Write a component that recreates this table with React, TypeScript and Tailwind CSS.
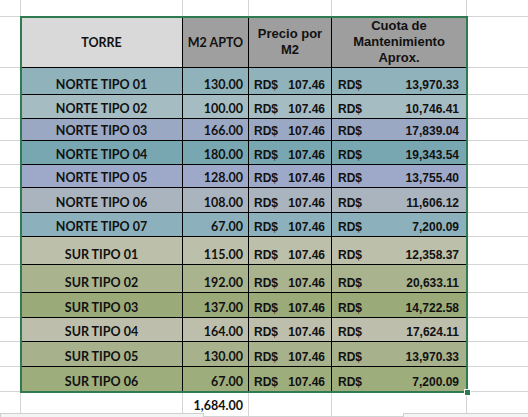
import React from 'react';

// filas de la tabla de cuotas (alto y color de fondo por fila)
const rows = [
  { name: 'NORTE TIPO 01', m2: '130.00', cuota: '13,970.33', h: 'h-[27px]', bg: 'bg-[#8fb2bb]' },
  { name: 'NORTE TIPO 02', m2: '100.00', cuota: '10,746.41', h: 'h-[24px]', bg: 'bg-[#a5bcc3]' },
  { name: 'NORTE TIPO 03', m2: '166.00', cuota: '17,839.04', h: 'h-[22px]', bg: 'bg-[#9aa8c4]' },
  { name: 'NORTE TIPO 04', m2: '180.00', cuota: '19,343.54', h: 'h-[24px]', bg: 'bg-[#78a7b2]' },
  { name: 'NORTE TIPO 05', m2: '128.00', cuota: '13,755.40', h: 'h-[23px]', bg: 'bg-[#9ea9c9]' },
  { name: 'NORTE TIPO 06', m2: '108.00', cuota: '11,606.12', h: 'h-[25px]', bg: 'bg-[#aab4bf]' },
  { name: 'NORTE TIPO 07', m2: '67.00', cuota: '7,200.09', h: 'h-[24px]', bg: 'bg-[#8cb1bc]' },
  { name: 'SUR TIPO 01', m2: '115.00', cuota: '12,358.37', h: 'h-[28px]', bg: 'bg-[#bcbfa9]' },
  { name: 'SUR TIPO 02', m2: '192.00', cuota: '20,633.11', h: 'h-[28px]', bg: 'bg-[#a9b38e]' },
  { name: 'SUR TIPO 03', m2: '137.00', cuota: '14,722.58', h: 'h-[25px]', bg: 'bg-[#9aaa78]' },
  { name: 'SUR TIPO 04', m2: '164.00', cuota: '17,624.11', h: 'h-[24px]', bg: 'bg-[#bdbfac]' },
  { name: 'SUR TIPO 05', m2: '130.00', cuota: '13,970.33', h: 'h-[25px]', bg: 'bg-[#a7b28c]' },
  { name: 'SUR TIPO 06', m2: '67.00', cuota: '7,200.09', h: 'h-[25px]', bg: 'bg-[#9dad7c]' },
];

const calibri = "font-['Lato',sans-serif] font-bold text-[12.5px] leading-[16px] text-[#111]";
const arial = "font-['Liberation_Sans',Arial,sans-serif] font-bold text-[12px] leading-[16px] text-[#111]";
const grid = 'shrink-0 border-r border-b border-[#d4d4d4]';
const cell = 'shrink-0 border-r border-b border-black flex items-end pb-[1px]';

export default function App() {
  return (
    <div className="relative w-[528px] h-[417px] overflow-hidden bg-white">
      {/* fila 1 vacía */}
      <div className="flex h-[17px]">
        <div className={`w-[21px] ${grid}`} />
        <div className={`w-[162px] ${grid}`} />
        <div className={`w-[66px] ${grid}`} />
        <div className={`w-[83px] ${grid}`} />
        <div className={`w-[135px] ${grid}`} />
        <div className="flex-1 border-b border-[#d4d4d4]" />
      </div>

      {/* encabezado */}
      <div className="flex h-[51px]">
        <div className={`w-[21px] ${grid}`} />
        <div className={`w-[162px] shrink-0 border-r border-b border-black bg-[#d9d9d9] flex items-center justify-center pt-[2px] ${calibri}`}>
          TORRE
        </div>
        <div className={`w-[66px] shrink-0 border-r border-b border-black bg-[#a09f9f] flex items-center justify-center pt-[2px] ${calibri}`}>
          M2 APTO
        </div>
        <div className={`w-[83px] shrink-0 border-r border-b border-black bg-[#9f9e9e] flex items-center justify-center text-center ${arial} text-[13px]`}>
          <span>
            Precio por
            <br />
            M2
          </span>
        </div>
        <div className={`w-[135px] shrink-0 border-r border-b border-black bg-[#9f9e9e] flex items-center justify-center text-center ${arial} text-[13px]`}>
          <span>
            Cuota de
            <br />
            Mantenimiento
            <br />
            Aprox.
          </span>
        </div>
        <div className="flex-1 border-b border-[#d4d4d4]" />
      </div>

      {rows.map((r) => (
        <div key={r.name} className={`flex ${r.h}`}>
          <div className={`w-[21px] ${grid}`} />
          <div className={`w-[162px] ${cell} ${r.bg} justify-center ${calibri}`}>{r.name}</div>
          <div className={`w-[66px] ${cell} ${r.bg} justify-end pr-[5px] ${calibri}`}>{r.m2}</div>
          <div className={`w-[83px] ${cell} ${r.bg} justify-between pl-[5px] pr-[6px] ${arial}`}>
            <span>RD$</span>
            <span>107.46</span>
          </div>
          <div className={`w-[135px] ${cell} ${r.bg} justify-between pl-[6px] pr-[7px] ${arial}`}>
            <span>RD$</span>
            <span>{r.cuota}</span>
          </div>
          <div className="flex-1 border-b border-[#d4d4d4]" />
        </div>
      ))}

      {/* total */}
      <div className="flex h-[25px]">
        <div className={`w-[21px] ${grid}`} />
        <div className={`w-[162px] ${grid}`} />
        <div className={`w-[66px] ${grid} flex items-end justify-end pr-[5px] pb-[2px] ${calibri}`}>1,684.00</div>
        <div className={`w-[83px] ${grid}`} />
        <div className={`w-[135px] ${grid}`} />
        <div className="flex-1" />
      </div>

      {/* selección de Excel */}
      <div className="absolute left-[20px] top-[16px] w-[448px] h-[377px] border-2 border-[#2f7a50] pointer-events-none" />
      <div className="absolute left-[464px] top-[389px] w-[7px] h-[7px] bg-[#2f7a50] border border-white" />

      {/* paneles flotantes al pie */}
      <div className="absolute left-0 top-[413px] w-[204px] h-[10px] border border-[#cfcfcf] bg-[#f4f4f4]" />
      <div className="absolute left-[403px] top-[413px] w-[140px] h-[10px] border border-[#cfcfcf] bg-[#f4f4f4]" />
    </div>
  );
}
